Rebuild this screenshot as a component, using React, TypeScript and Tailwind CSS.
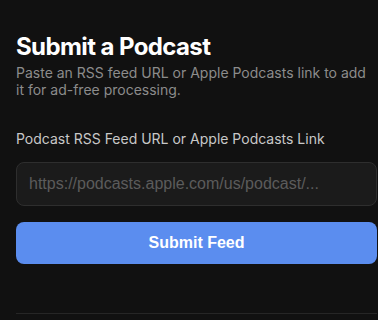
import React from "react";

export default function App() {
  return (
    <div className="w-[378px] h-[320px] overflow-hidden bg-[#111111]">
      <div className="w-[361px] ml-4 pt-[33px] flex flex-col">
        <h1 className="font-['Inter',sans-serif] font-bold text-[24px] leading-[28px] text-white tracking-[-0.6px]">
          Submit a Podcast
        </h1>
        <p className="mt-[3px] font-['Inter',sans-serif] text-[14px] leading-[17px] text-[#8c8c8c]">
          Paste an RSS feed URL or Apple Podcasts link to add it for ad-free processing.
        </p>
        <label className="mt-[32px] font-['Inter',sans-serif] text-[14px] leading-[17px] text-[#c8c8c8]">
          Podcast RSS Feed URL or Apple Podcasts Link
        </label>
        <input
          className="mt-[15px] h-[44px] w-full rounded-lg border border-[#2e2e2e] bg-[#1b1b1b] px-3 font-['Liberation_Sans',sans-serif] text-[16px] text-white placeholder:text-[#5c5c5c] outline-none"
          placeholder="https://podcasts.apple.com/us/podcast/..."
        />
        <button className="mt-4 h-[42px] w-full rounded-lg bg-[#5b8def] font-['Liberation_Sans',sans-serif] font-bold text-[16px] text-white">
          Submit Feed
        </button>
        <div className="mt-[49px] h-px w-full bg-[#262626]" />
      </div>
    </div>
  );
}
